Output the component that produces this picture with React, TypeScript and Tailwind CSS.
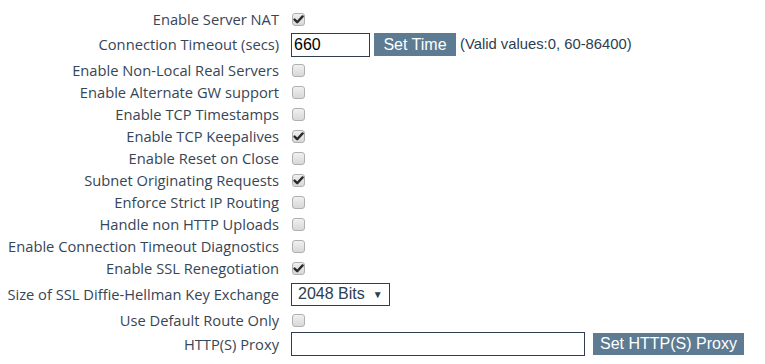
import React from "react";

function Check({ checked }: { checked?: boolean }) {
  return (
    <div className="ml-px w-[13px] h-[13px] rounded-[3px] border border-[#b0b0b0] bg-gradient-to-b from-[#f0f0f0] to-[#d8d8d8] flex items-center justify-center">
      {checked && (
        <svg width="11" height="11" viewBox="0 0 11 11">
          <path d="M1.6 5.6 L4.2 8.2 L9.6 2.4" fill="none" stroke="#2a2a2a" strokeWidth="2.4" strokeLinecap="round" strokeLinejoin="round" />
        </svg>
      )}
    </div>
  );
}

function Row({ label, h, children }: { label: string; h: string; children: React.ReactNode }) {
  return (
    <div className={`flex items-center ${h}`}>
      <div className="w-[280px] text-right pr-px text-[14.7px] text-[#374656] whitespace-nowrap" style={{ fontFamily: '"Open Sans", sans-serif' }}>
        {label}
      </div>
      <div className="ml-[11px] flex items-center">{children}</div>
    </div>
  );
}

const arial = { fontFamily: '"Liberation Sans", Arial, sans-serif' };

export default function App() {
  const checks: [string, boolean][] = [
    ["Enable Non-Local Real Servers", false],
    ["Enable Alternate GW support", false],
    ["Enable TCP Timestamps", false],
    ["Enable TCP Keepalives", true],
    ["Enable Reset on Close", false],
    ["Subnet Originating Requests", true],
    ["Enforce Strict IP Routing", false],
    ["Handle non HTTP Uploads", false],
    ["Enable Connection Timeout Diagnostics", false],
    ["Enable SSL Renegotiation", true],
  ];
  return (
    <div className="w-[765px] h-[364px] bg-white pt-[8px] overflow-hidden">
      <Row label="Enable Server NAT" h="h-[22px]">
        <Check checked />
      </Row>
      <Row label="Connection Timeout (secs)" h="h-[29px]">
        <div className="w-[79px] h-[24px] border border-[#2c3e50] px-[2px] flex items-center text-[16px] text-black" style={arial}>
          660
        </div>
        <div className="ml-[4px] w-[82px] h-[23px] bg-[#5d7b92] text-white text-[16px] flex items-center justify-center" style={arial}>
          Set Time
        </div>
        <span className="ml-[4px] text-[14.8px] text-[#2c3e50]" style={arial}>
          (Valid values:0, 60-86400)
        </span>
      </Row>
      {checks.map(([l, c]) => (
        <Row key={l} label={l} h="h-[22px]">
          <Check checked={c} />
        </Row>
      ))}
      <Row label="Size of SSL Diffie-Hellman Key Exchange" h="h-[30px]">
        <div className="w-[99px] h-[23px] border border-[#2c3e50] pl-[6px] flex items-center text-[16px] text-[#2c3e50]" style={arial}>
          2048 Bits
          <span className="ml-[8px] text-[10px]">▼</span>
        </div>
      </Row>
      <Row label="Use Default Route Only" h="h-[22px]">
        <Check />
      </Row>
      <Row label="HTTP(S) Proxy" h="h-[26px]">
        <div className="w-[294px] h-[24px] border border-[#2c3e50]" />
        <div className="ml-[8px] w-[151px] h-[22px] bg-[#5d7b92] text-white text-[16px] flex items-center justify-center" style={arial}>
          Set HTTP(S) Proxy
        </div>
      </Row>
    </div>
  );
}
